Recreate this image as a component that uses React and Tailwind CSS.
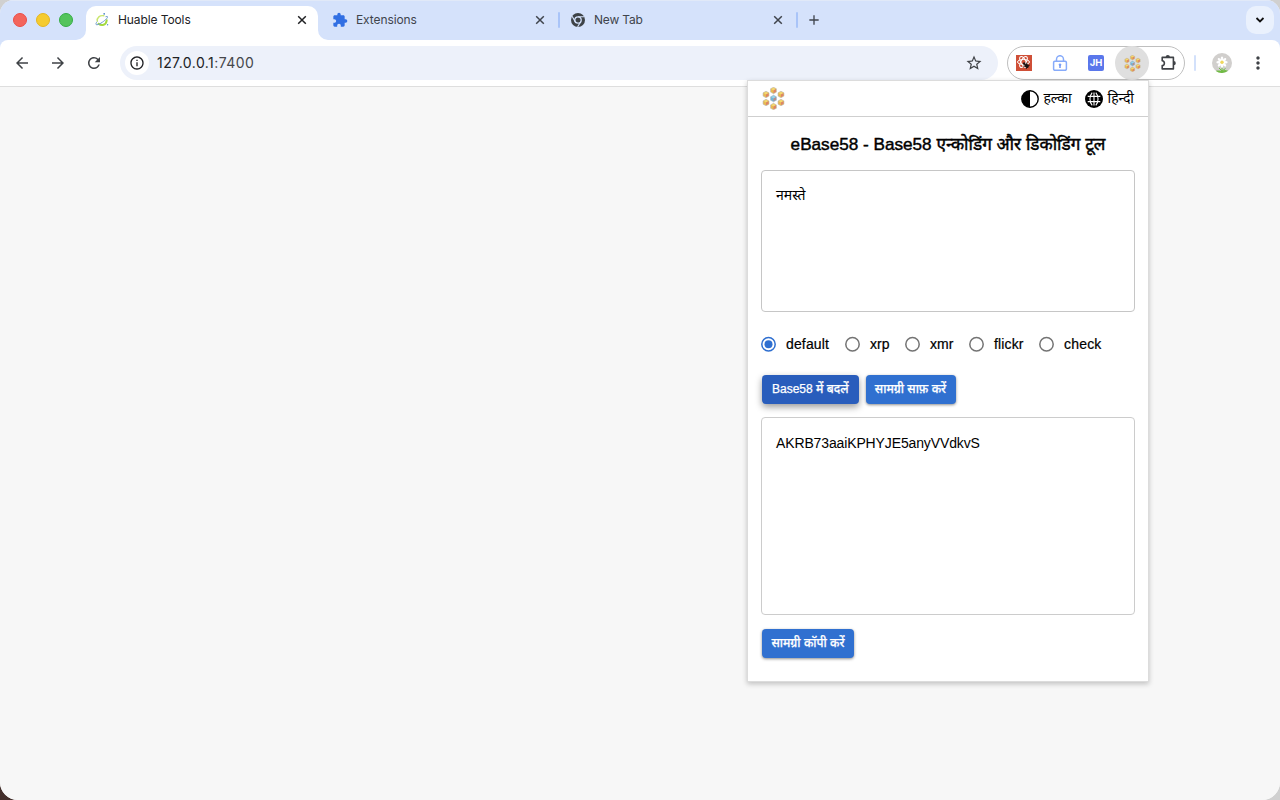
import React from "react";
import { MdArrowBack, MdArrowForward, MdRefresh, MdOutlineInfo, MdStarBorder, MdExtension, MdMoreVert, MdAdd } from "react-icons/md";

const HexCubes = ({ size, className }) => {
  const cubes = [[12, 3.6], [4.2, 7.8], [19.8, 7.8], [4.2, 16.2], [19.8, 16.2], [12, 20.4], [12, 12]];
  return (
    <svg width={size} height={size} viewBox="0 0 24 24" className={className}>
      {cubes.map(([x, y], i) => (
        <g key={i} transform={`translate(${x} ${y})`}>
          <path d="M0-3.4 3.1-1.7V1.7L0 3.4-3.1 1.7V-1.7Z" fill={i === 6 ? "#6fb4d6" : "#e8b950"} stroke="#b5b8be" strokeWidth=".6" />
          <path d="M0-2.9 2.5-1.5 0 0-2.5-1.5Z" fill={i === 6 ? "#9bd3ea" : "#f2d874"} />
          <path d="M0 0 2.6-1.4V1.4L0 2.9Z" fill={i === 6 ? "#bd8c86" : "#dd8468"} />
        </g>
      ))}
    </svg>
  );
};

const OrbitLogo = () => (
  <svg width="16" height="16" viewBox="0 0 16 16" fill="none" strokeLinecap="round">
    <path d="M3.3 9.2C2.6 5.8 6 2.9 9.8 3.8" stroke="#c9e66e" strokeWidth="1.4" />
    <path d="M4.6 11.7c3 2.4 7.6 1.4 8.1-3.4" stroke="#a4da3f" strokeWidth="2" />
    <path d="M2.8 10C.2 13.4 3 14 8.4 10.2 13.3 6.8 15.5 3.4 11.9 4.6" stroke="#6f9bcb" strokeWidth="1" />
    <circle cx="10.2" cy="1.8" r=".9" fill="#4b86c5" />
    <circle cx="13.6" cy="12.8" r=".7" fill="#5b8fc8" />
  </svg>
);

const ChromeLogo = () => (
  <svg width="14" height="14" viewBox="0 0 14 14">
    <circle cx="7" cy="7" r="7" fill="#3e4347" />
    <circle cx="7" cy="7" r="3.2" fill="none" stroke="#d5e2fb" strokeWidth="1.3" />
    <path d="M7 3.8h6.2M4.2 8.6 1.1 3.3M9.7 8.7l-3.1 5.2" stroke="#d5e2fb" strokeWidth="1.1" />
  </svg>
);

const BugLogo = () => (
  <svg width="16" height="16" viewBox="0 0 16 16" fill="none">
    <path d="M0 0h16v16H0z" fill="#cf4f37" />
    <g stroke="#fff" strokeWidth="1">
      <ellipse cx="7.5" cy="7" rx="6" ry="2.5" />
      <ellipse cx="7.5" cy="7" rx="6" ry="2.5" transform="rotate(60 7.5 7)" />
      <ellipse cx="7.5" cy="7" rx="6" ry="2.5" transform="rotate(120 7.5 7)" />
    </g>
    <g transform="rotate(-48 9.6 9.9)">
      <ellipse cx="9.6" cy="11.4" rx="1.9" ry="2.3" fill="#1c1414" />
      <circle cx="9.6" cy="8" r="1.3" fill="#1c1414" />
      <path d="M7 9.2l5.2 4M12.2 9.2l-5.2 4" stroke="#1c1414" strokeWidth=".8" />
    </g>
  </svg>
);

const LockIcon = () => (
  <svg width="16" height="16" viewBox="0 0 16 16" fill="none" stroke="#87abfa" strokeWidth="1.5">
    <rect x="1.6" y="6.2" width="12.8" height="9.1" rx="1.2" />
    <path d="M4.5 6V4.2a3.5 3.5 0 0 1 7 0V6" />
    <circle cx="8" cy="9.7" r=".9" fill="#6f96f5" stroke="#6f96f5" strokeWidth=".7" />
    <path d="M8 10v3" stroke="#6f96f5" />
  </svg>
);

const PuzzleOutline = () => (
  <svg width="18" height="18" viewBox="0 0 18 18" fill="none" stroke="#3f4246" strokeWidth="1.6" strokeLinejoin="round">
    <path d="M2.2 3.4H13.4V14.9H2.2V11.6c2.9-.2 2.9-4.7 0-4.9Z" />
    <path d="M5.7 3.1a2.1 2.1 0 0 1 4.2 0ZM13.7 7.1a2.1 2.1 0 0 1 0 4.2Z" fill="#3f4246" stroke="none" />
  </svg>
);

const Flower = () => (
  <svg width="20" height="20" viewBox="0 0 20 20">
    <circle cx="10" cy="10" r="10" fill="#d1cfcd" />
    <path d="M3.8 17.9c1-.7 3-.4 5.5-.2l3.7-.6 3.2.7A10 10 0 0 1 3.8 17.9Z" fill="#71bb45" />
    <path d="M10 12v7M10 18l-3-3M10 18l3.5-2.5" stroke="#71bb45" strokeWidth="1" />
    {[0, 45, 90, 135, 180, 225, 270, 315].map((a) => (
      <ellipse key={a} cx="10" cy="6" rx="1.3" ry="2.4" fill="#fff" transform={`rotate(${a} 10 9.3)`} />
    ))}
    <circle cx="10" cy="9.3" r="1.7" fill="#f0d75c" />
  </svg>
);

const Globe = () => (
  <svg width="18" height="18" viewBox="0 0 18 18" fill="none">
    <circle cx="9" cy="9" r="9" fill="#000" />
    <g stroke="#fff" strokeWidth="1.1">
      <path d="M9 2.6v12.8M2.7 6.4h12.6M2.7 11.6h12.6" />
      <path d="M7.2 2.7c-3 3.6-3 9 0 12.6M10.8 2.7c3 3.6 3 9 0 12.6" />
    </g>
  </svg>
);

const Contrast = () => (
  <svg width="18" height="18" viewBox="0 0 18 18">
    <circle cx="9" cy="9" r="8.2" fill="#fff" stroke="#000" strokeWidth="1.4" />
    <path d="M9 .8a8.2 8.2 0 0 0 0 16.4Z" fill="#000" />
  </svg>
);

const Tab = ({ icon, title, className, titleClass }) => (
  <div className={`flex h-[34px] items-center text-xs text-[#3f444c] ${className}`}>
    <span className="flex w-4 shrink-0 justify-center">{icon}</span>
    <span className={`ml-2 grow ${titleClass}`}>{title}</span>
    <svg width="14" height="14" viewBox="0 0 14 14" stroke="currentColor" strokeWidth="1.5"><path d="m3.2 3.2 7.6 7.6M10.8 3.2l-7.6 7.6" /></svg>
  </div>
);

const Flare = ({ side }) => (
  <svg width="10" height="10" viewBox="0 0 10 10" className="shrink-0 self-end">
    <path d={side === "left" ? "M10 0v10H0A10 10 0 0 0 10 0Z" : "M0 0v10h10A10 10 0 0 1 0 0Z"} fill="#fff" />
  </svg>
);

const Radio = ({ label, checked, labelClass, className }) => (
  <label className={`flex items-center ${className}`}>
    <svg width="15" height="16" viewBox="0 0 15 16" fill="none" className={`-mt-px shrink-0 ${checked ? "text-[#2f6fd0]" : "text-[#747474]"}`}>
      <circle cx="7.5" cy="8.2" r="6.7" stroke="currentColor" strokeWidth="1.5" />
      {checked && <circle cx="7.5" cy="8.2" r="4" fill="currentColor" />}
    </svg>
    <span className={`ml-2.5 whitespace-nowrap ${labelClass}`}>{label}</span>
  </label>
);

const Button = ({ children, className }) => (
  <button className={`flex h-[29px] items-center justify-center rounded-[4px] pb-px text-[12px] font-medium whitespace-nowrap text-white [-webkit-text-stroke:0.25px_white] ${className}`}>{children}</button>
);

export default function App() {
  return (
    <div className="relative h-[800px] w-[1280px] overflow-hidden bg-[#d0d0d0] font-['Liberation_Sans','Noto_Sans',sans-serif]">
      <div className="flex h-full bg-linear-to-b from-transparent from-50% to-[#432f2b] to-50% bg-[length:30px_100%] bg-no-repeat">
        <div className="flex h-full w-full flex-col overflow-hidden rounded-[14px] rounded-b-[18px] bg-[#f7f7f7]">
          <header className="flex h-10 items-end border-t border-[#e1e9f8] bg-[#d5e2fb] font-['Inter',sans-serif]">
            <div className="flex h-full w-[76px] items-center gap-[9px] pb-px pl-[13px]">
              <span className="size-3.5 shrink-0 rounded-full border border-[#ec4c46] bg-[#f3655c]" />
              <span className="size-3.5 shrink-0 rounded-full border border-[#e3b51f] bg-[#f5cb2f]" />
              <span className="size-3.5 shrink-0 rounded-full border border-[#36ad45] bg-[#54c45c]" />
            </div>
            <Flare side="left" />
            <div className="h-[34px] w-[232px] rounded-t-[10px] bg-white">
              <Tab icon={<OrbitLogo />} title="Huable Tools" className="-mt-[3px] pr-[9px] pl-2 !text-[#202124]" titleClass="tracking-[-0.1px]" />
            </div>
            <Flare side="right" />
            <Tab icon={<MdExtension size={16} className="text-[#316fe3]" />} title="Extensions" className="mb-[3px] w-[230px] pr-[11px] pl-[4px]" titleClass="tracking-[-0.1px]" />
            <span className="mb-3 h-4 w-0.5 rounded bg-[#a9c4f8]" />
            <Tab icon={<ChromeLogo />} title="New Tab" className="mb-[3px] w-[236px] pr-[11px] pl-[10px]" titleClass="tracking-[-0.2px]" />
            <span className="mb-3 h-4 w-0.5 rounded bg-[#a9c4f8]" />
            <MdAdd size={16} className="mb-3 ml-[8px] text-[#3f444c]" />
            <span className="mr-1.5 mb-1.5 ml-auto flex size-7 items-center justify-center rounded-[10px] bg-[#eaf1fd]">
              <svg width="10" height="6" viewBox="0 0 10 6" fill="none" stroke="#111" strokeWidth="1.8"><path d="m1.5 1 3.5 3.5L8.5 1" /></svg>
            </span>
          </header>

          <div className="bg-[#d5e2fb]">
            <div className="flex h-[47px] items-center rounded-t-[8px] border-b border-[#dedede] bg-white pl-[13px]">
              <div className="flex items-center gap-[18px] text-[#3f4246]">
                <MdArrowBack size={18} />
                <MdArrowForward size={18} />
                <MdRefresh size={18} />
              </div>
              <div className="ml-[17px] flex h-[34px] w-[878px] items-center rounded-full bg-[#edf1fa] pr-[15px] pl-[5px]">
                <span className="flex size-6 items-center justify-center rounded-full bg-white text-[#202124]"><MdOutlineInfo size={16} /></span>
                <span className="ml-[8px] grow font-['Inter',sans-serif] text-sm tracking-[0.44px] text-[#45474a]"><span className="text-[#202124]">127.0.0.1</span>:7400</span>
                <MdStarBorder size={18} className="text-[#3f4246]" />
              </div>
              <div className="ml-[9px] flex h-[34px] w-[178px] items-center rounded-full border border-[#bfbfbf] pl-2">
                <BugLogo />
                <span className="ml-5"><LockIcon /></span>
                <span className="ml-5 flex size-4 items-center justify-center rounded-[2px] bg-[#5a77eb] font-['Inter',sans-serif] text-[9.5px] font-bold text-white">JH</span>
                <span className="-my-px ml-[11px] flex size-[34px] items-center justify-center rounded-full bg-[#dfdfdf]"><HexCubes size={17} /></span>
                <span className="-mt-px ml-[11px]"><PuzzleOutline /></span>
              </div>
              <span className="ml-[9px] h-4 w-0.5 rounded bg-[#d3e1fb]" />
              <span className="ml-4"><Flower /></span>
              <MdMoreVert size={20} className="ml-[16px] text-[#3f4246]" />
            </div>
          </div>
          <main className="grow bg-[#f7f7f7]" />
        </div>
      </div>

      <section className="absolute top-20 left-[747px] flex h-[602px] w-[402px] flex-col border border-[#dcdcdc] bg-white text-black shadow-[0_2px_5px_rgba(0,0,0,0.22)]">
        <div className="flex h-9 shrink-0 items-center border-b border-[#cfcfcf] pr-[14px] pl-[14px] text-[14px]">
          <HexCubes size={23} />
          <span className="ml-auto flex items-center gap-[4px]"><Contrast /><span className="whitespace-nowrap">हल्का</span></span>
          <span className="ml-[13px] flex items-center gap-[5px]"><Globe /><span className="whitespace-nowrap">हिन्दी</span></span>
        </div>
        <h1 className="mt-[15px] h-6 text-center text-[17.15px] leading-6 whitespace-nowrap [-webkit-text-stroke:0.45px_black]">eBase58 - Base58 एन्कोडिंग और डिकोडिंग टूल</h1>
        <div className="mx-[13px] mt-[14px] h-[142px] shrink-0 rounded-[4px] border border-[#c6c6c6] px-[14px] pt-[14px] text-[14px] leading-5">नमस्ते</div>
        <div className="mt-[22px] flex h-5 items-center pl-[13px] text-[14px] [-webkit-text-stroke:0.2px_black]">
          <Radio label="default" checked labelClass="w-[43px] tracking-[0.15px]" />
          <Radio label="xrp" labelClass="w-5" className="ml-[16px]" />
          <Radio label="xmr" labelClass="w-6" className="ml-[15px]" />
          <Radio label="flickr" labelClass="w-[30px] tracking-[0.15px]" className="ml-[15px]" />
          <Radio label="check" labelClass="tracking-[0.2px]" className="ml-[15px]" />
        </div>
        <div className="mt-[21px] flex h-[29px] gap-[7px] pl-[14px]">
          <Button className="w-[96.5px] bg-[#295dbc] shadow-[0_3px_7px_rgba(0,0,0,0.4)]">Base58 में बदलें</Button>
          <Button className="w-[90px] bg-[#3070d0] shadow-[0_1px_3px_rgba(0,0,0,0.45)]">सामग्री साफ़ करें</Button>
        </div>
        <div className="mx-[13px] mt-[13px] h-[198px] shrink-0 rounded-[4px] border border-[#cccccc] px-[14px] pt-[15px] text-[14px] leading-5 tracking-[-0.13px]">AKRB73aaiKPHYJE5anyVVdkvS</div>
        <div className="mt-[14px] flex h-[29px] pl-[14px]">
          <Button className="w-[92px] bg-[#3070d0] shadow-[0_1px_3px_rgba(0,0,0,0.45)]">सामग्री कॉपी करें</Button>
        </div>
      </section>
    </div>
  );
}
